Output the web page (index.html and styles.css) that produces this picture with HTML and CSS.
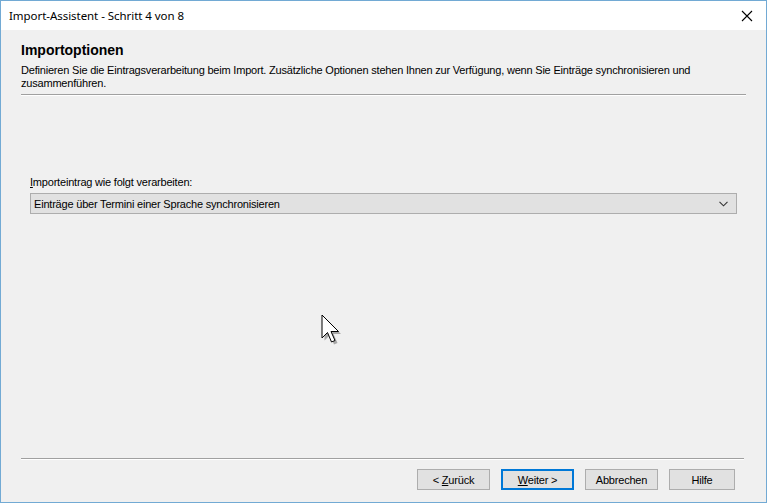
FILE: index.html
```html
<!DOCTYPE html>
<html lang="de">
<head>
<meta charset="utf-8">
<title>Import-Assistent</title>
<link rel="stylesheet" href="styles.css">
</head>
<body>
<div class="window">
  <div class="titlebar">
    <span class="title">Import-Assistent - Schritt 4 von 8</span>
    <svg class="close" width="12" height="12" viewBox="0 0 12 12"><path d="M1 1 L11 11 M11 1 L1 11" stroke="#000" stroke-width="1.1" fill="none"/></svg>
  </div>
  <div class="client">
    <div class="header">
      <div class="heading">Importoptionen</div>
      <div class="desc">Definieren Sie die Eintragsverarbeitung beim Import. Zusätzliche Optionen stehen Ihnen zur Verfügung, wenn Sie Einträge synchronisieren und zusammenführen.</div>
    </div>
    <div class="sep top-sep"></div>
    <div class="body">
      <div class="label"><u>I</u>mporteintrag wie folgt verarbeiten:</div>
      <div class="combo">
        <span>Einträge über Termini einer Sprache synchronisieren</span>
        <svg class="chev" width="9" height="6" viewBox="0 0 9 6"><path d="M0.5 0.8 L4.5 4.8 L8.5 0.8" stroke="#333" stroke-width="1.1" fill="none"/></svg>
      </div>
    </div>
    <div class="sep bottom-sep"></div>
    <div class="buttons">
      <div class="btn"><span>&lt; <u>Z</u>urück</span></div>
      <div class="btn default"><span><u>W</u>eiter &gt;</span></div>
      <div class="btn"><span>Abbrechen</span></div>
      <div class="btn help"><span>Hilfe</span></div>
    </div>
    <svg class="cursor" width="26" height="36" viewBox="0 0 26 36">
      <path d="M1 1 L1 24 L6.5 18.5 L10.5 28 L14 26.5 L10 17.5 L17.5 17.5 Z" fill="#000" opacity="0.3" transform="translate(2.5,2.5)"/>
      <path d="M1 1 L1 24 L6.5 18.5 L10.5 28 L14 26.5 L10 17.5 L17.5 17.5 Z" fill="#fff" stroke="#000" stroke-width="1"/>
    </svg>
  </div>
</div>
</body>
</html>
```
FILE: styles.css
```css
html, body {
  margin: 0;
  padding: 0;
  background: #f0f0f0;
}
.window {
  width: 767px;
  height: 503px;
  box-sizing: border-box;
  border: 1px solid #72aad4;
  display: flex;
  flex-direction: column;
  font-family: "Liberation Sans", Arial, sans-serif;
  font-size: 11px;
  letter-spacing: -0.2px;
  color: #000;
  overflow: hidden;
}
.titlebar {
  height: 29px;
  background: #fff;
  display: flex;
  align-items: center;
  justify-content: space-between;
  padding: 0 13px 0 8px;
  flex: none;
}
.title {
  font-family: "Noto Sans", "Open Sans", sans-serif;
  font-size: 11.5px;
  letter-spacing: -0.05px;
  color: #000;
}
.close {
  display: block;
}
.client {
  flex: 1;
  background: #f0f0f0;
  display: flex;
  flex-direction: column;
  position: relative;
  padding: 0 20px 0 20px;
}
.header {
  padding-top: 12px;
  height: 50px;
  box-sizing: border-box;
}
.heading {
  font-weight: bold;
  font-size: 14px;
  letter-spacing: 0;
  line-height: 16px;
  margin-bottom: 6px;
}
.desc {
  line-height: 13px;
}
.sep {
  height: 1px;
  background: #a0a0a0;
  border-bottom: 1px solid #fff;
  flex: none;
}
.top-sep {
  margin-top: 14px;
}
.body {
  flex: 1;
  padding: 80px 9px 0 9px;
}
.label {
  line-height: 13px;
  margin-bottom: 4px;
}
.combo {
  height: 21px;
  box-sizing: border-box;
  border: 1px solid #adadad;
  background: #e1e1e1;
  display: flex;
  align-items: center;
  justify-content: space-between;
  padding: 0 8px 0 3px;
}
.chev {
  display: block;
}
.bottom-sep {
  margin-right: 2px;
}
.buttons {
  height: 42px;
  display: flex;
  justify-content: flex-end;
  gap: 11px;
  padding: 9px 11px 0 0;
  box-sizing: border-box;
}
.btn {
  width: 73px;
  height: 21px;
  box-sizing: border-box;
  border: 1px solid #adadad;
  background: #e1e1e1;
  display: flex;
  align-items: center;
  justify-content: center;
}
.btn.default {
  border: 2px solid #0078d7;
}
.btn.help {
  width: 66px;
}
.cursor {
  position: absolute;
  left: 320px;
  top: 284px;
}
```
